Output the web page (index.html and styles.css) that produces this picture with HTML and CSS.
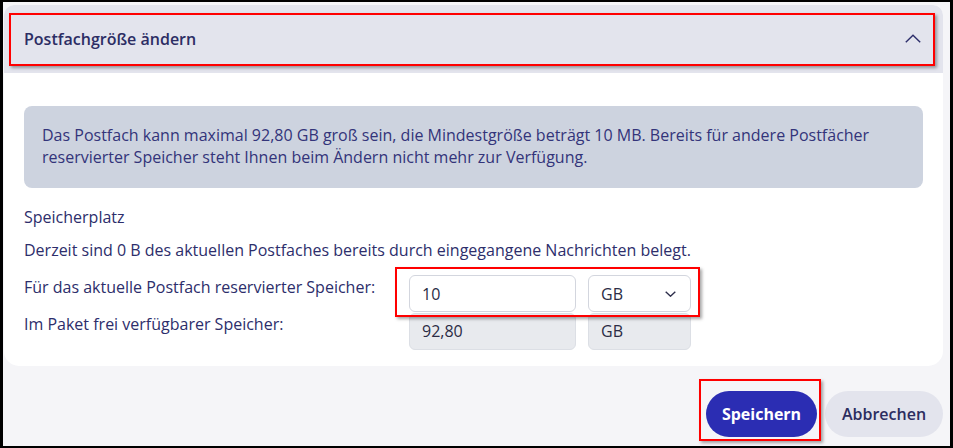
FILE: index.html
```html
<!DOCTYPE html>
<html lang="de">
<head>
<meta charset="utf-8">
<title>Postfachgröße ändern</title>
<link rel="stylesheet" href="styles.css">
</head>
<body>
<div class="frame">
  <section class="card">
    <header class="card-head">
      <h2 class="card-title">Postfachgröße ändern</h2>
      <svg class="chev-up" width="16" height="9" viewBox="0 0 16 9"><path d="M0.8 8.2 L8 1.2 L15.2 8.2" fill="none" stroke="#2d2e6b" stroke-width="1.4"/></svg>
    </header>
    <div class="card-body">
      <div class="info">Das Postfach kann maximal 92,80 GB groß sein, die Mindestgröße beträgt 10 MB. Bereits für andere Postfächer reservierter Speicher steht Ihnen beim Ändern nicht mehr zur Verfügung.</div>
      <p class="section-label">Speicherplatz</p>
      <p class="usage">Derzeit sind 0 B des aktuellen Postfaches bereits durch eingegangene Nachrichten belegt.</p>
      <div class="row row-first">
        <span class="label">Für das aktuelle Postfach reservierter Speicher:</span>
        <div class="field">10</div>
        <div class="field select">GB<svg class="chev-down" width="11" height="6" viewBox="0 0 11 6"><path d="M0.7 0.7 L5.5 5.2 L10.3 0.7" fill="none" stroke="#2d2e4b" stroke-width="1.4"/></svg></div>
      </div>
      <div class="row">
        <span class="label">Im Paket frei verfügbarer Speicher:</span>
        <div class="field disabled">92,80</div>
        <div class="field disabled">GB</div>
      </div>
    </div>
  </section>
  <div class="actions">
    <button class="btn btn-primary">Speichern</button>
    <button class="btn btn-secondary">Abbrechen</button>
  </div>
</div>
<div class="mark mark-head"></div>
<div class="mark mark-fields"></div>
<div class="mark mark-save"></div>
</body>
</html>
```
FILE: styles.css
```css
html, body {
  margin: 0;
  padding: 0;
}
body {
  position: relative;
  width: 953px;
  height: 448px;
  overflow: hidden;
  font-family: "Open Sans", "Noto Sans", sans-serif;
  color: #2d2e6b;
}
.frame {
  box-sizing: border-box;
  width: 953px;
  height: 448px;
  border-style: solid;
  border-color: #000;
  border-width: 2px 3px 2px 3px;
  background: #f5f5f8;
  padding: 3px 7px 0 1px;
}
.card {
  background: #fff;
  border-radius: 10px 10px 15px 15px;
  height: 361px;
  box-sizing: border-box;
}
.card-head {
  height: 68px;
  background: #e3e4ed;
  border-radius: 10px 10px 0 0;
  display: flex;
  align-items: center;
  justify-content: space-between;
  padding: 0 22px 0 20px;
}
.card-title {
  margin: 0;
  font-size: 16px;
  font-weight: 600;
  color: #2c2d64;
  line-height: 22px;
}
.chev-up {
  display: block;
  margin-top: -2px;
}
.card-body {
  padding: 33px 20px 0 20px;
  font-size: 16px;
  line-height: 22px;
}
.info {
  background: #cdd3df;
  border-radius: 8px;
  padding: 18px 18px 20px 18px;
  height: 82px;
  box-sizing: border-box;
  color: #33347a;
}
.section-label {
  margin: 18px 0 0 0;
}
.usage {
  margin: 11px 0 0 0;
}
.row {
  display: grid;
  grid-template-columns: 373px 167px 103px;
  column-gap: 12px;
  align-items: start;
  margin-top: 1px;
}
.row-first {
  margin-top: 14px;
}
.row-first .label {
  padding-top: 1px;
}
.field {
  box-sizing: border-box;
  height: 37px;
  border: 1px solid #d3d6de;
  border-radius: 6px;
  background: #fff;
  padding: 0 12px;
  display: flex;
  align-items: center;
  font-size: 16px;
  color: #2b2c45;
}
.field.select {
  justify-content: space-between;
  padding-right: 14px;
}
.chev-down {
  display: block;
}
.field.disabled {
  background: #e8eaee;
  border-color: #dcdfe5;
  padding-bottom: 1px;
}
.actions {
  display: flex;
  justify-content: flex-end;
  gap: 8px;
  margin-top: 25px;
}
.btn {
  height: 46px;
  border: none;
  border-radius: 23px;
  font-family: "Open Sans", "Noto Sans", sans-serif;
  font-size: 16px;
  font-weight: 600;
  padding: 0;
  cursor: pointer;
}
.btn-primary {
  width: 111px;
  background: #2b2db3;
  color: #fff;
  font-weight: 700;
}
.btn-secondary {
  width: 118px;
  background: #e3e4ed;
  color: #2c2d5f;
}
.mark {
  position: absolute;
  box-sizing: border-box;
  border: 2px solid #f00;
  box-shadow: 2px 2px 3px rgba(0, 0, 0, 0.35);
  pointer-events: none;
}
.mark-head {
  left: 9px;
  top: 13px;
  width: 926px;
  height: 53px;
}
.mark-fields {
  left: 395px;
  top: 267px;
  width: 305px;
  height: 50px;
}
.mark-save {
  left: 699px;
  top: 379px;
  width: 122px;
  height: 62px;
}
```
